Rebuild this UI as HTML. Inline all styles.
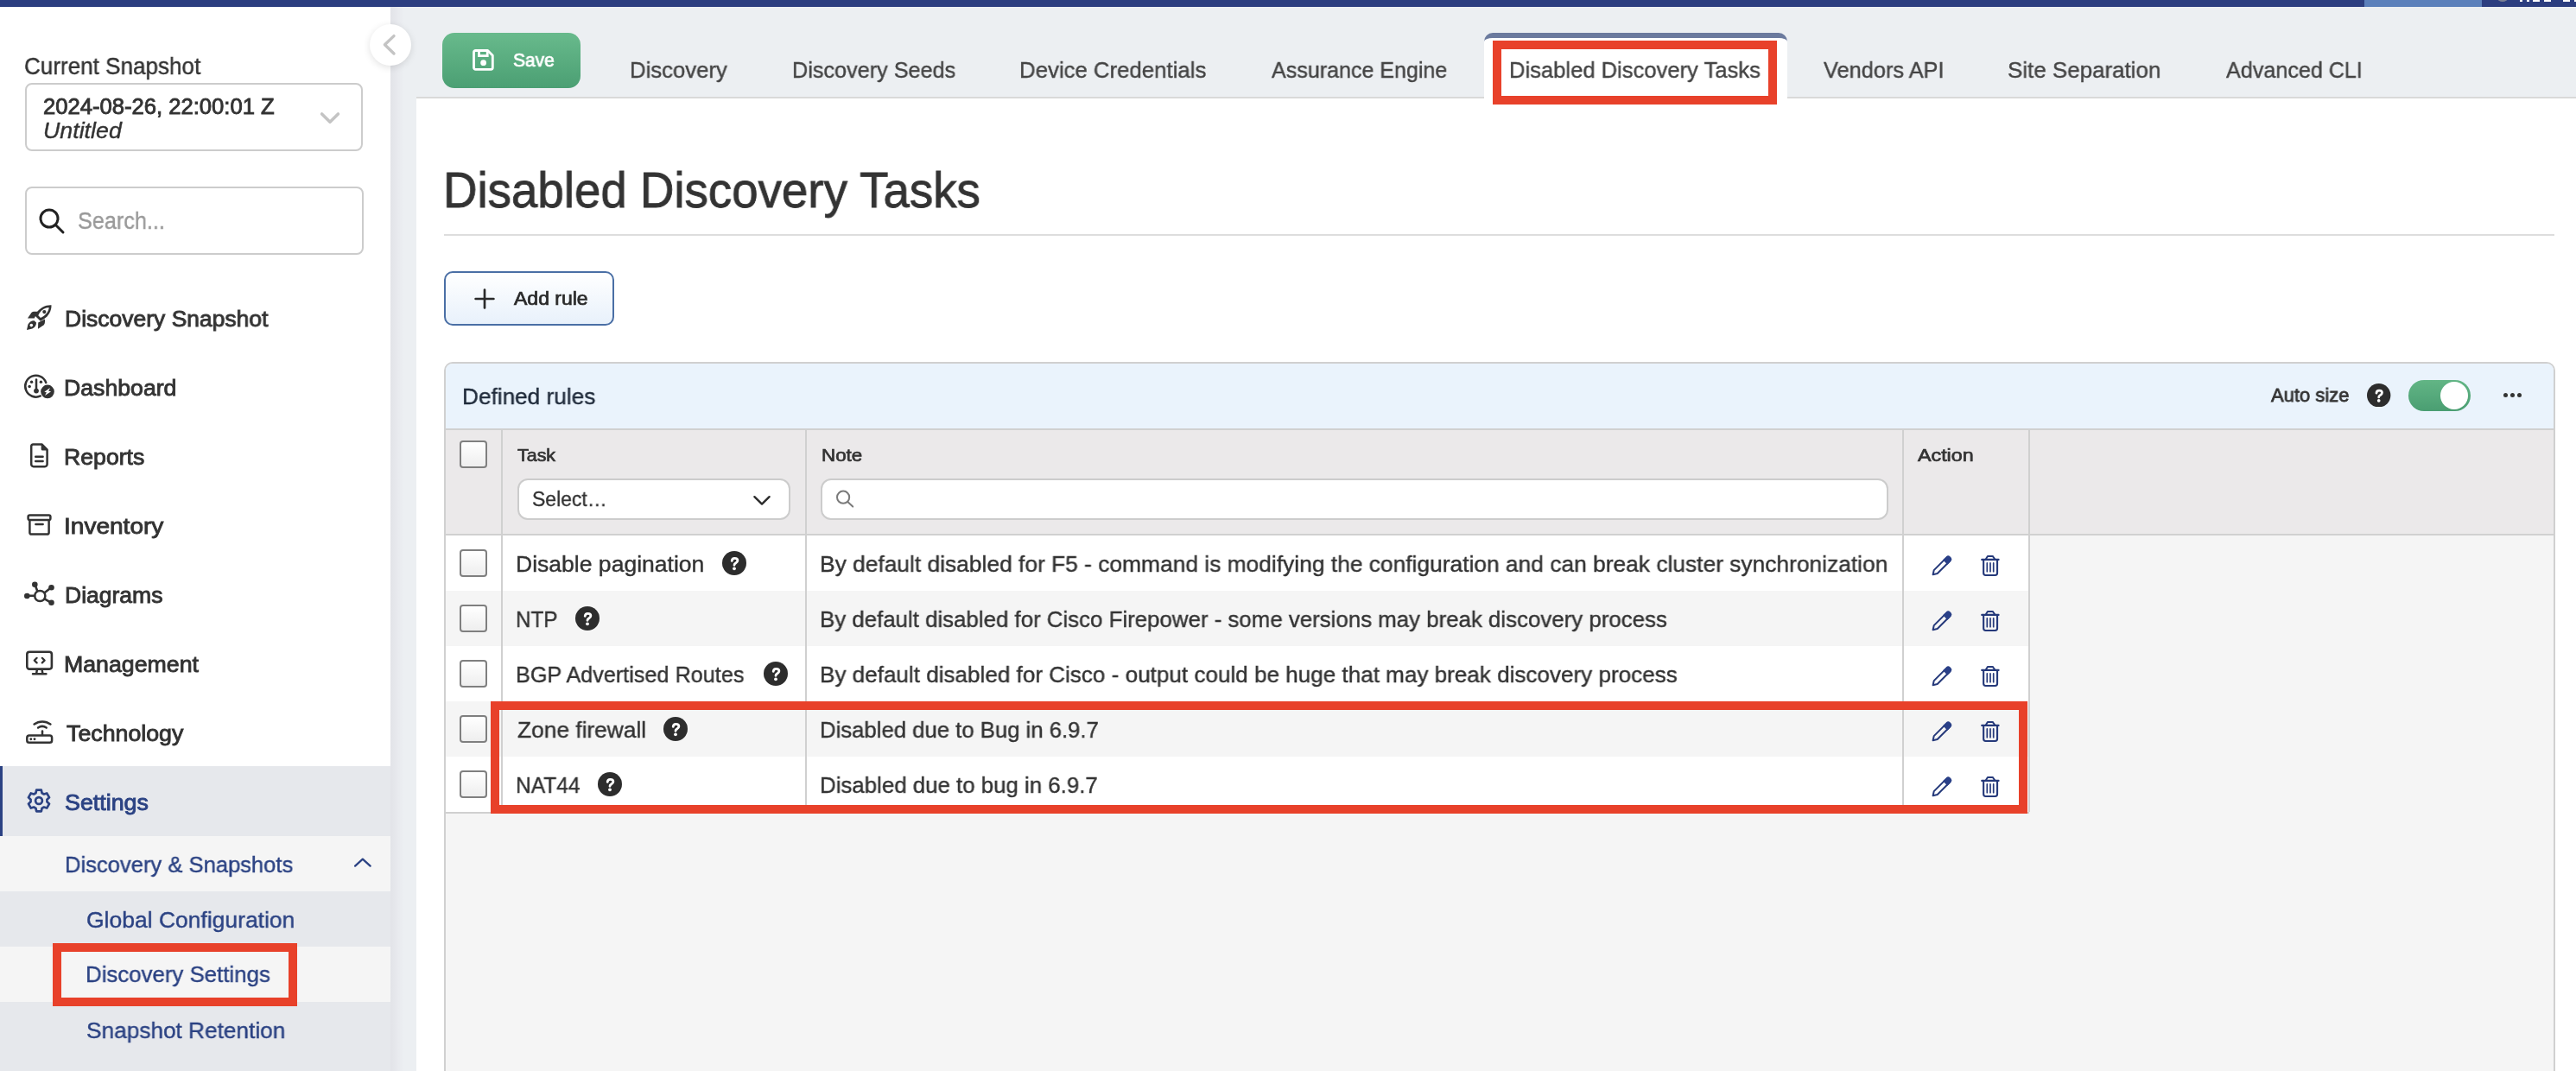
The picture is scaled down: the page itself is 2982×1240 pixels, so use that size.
<!DOCTYPE html>
<html><head><meta charset="utf-8"><style>
html,body{margin:0;padding:0;}
body{width:2982px;height:1240px;overflow:hidden;position:relative;background:#fff;font-family:'Liberation Sans', sans-serif;}
.r{position:absolute;}
.t{position:absolute;white-space:nowrap;line-height:1;transform-origin:0 0;will-change:transform;}
</style></head><body>
<div class="r" style="left:0.0px;top:0.0px;width:2982.0px;height:8.0px;background:#2c3e80"></div>
<div class="r" style="left:2737.0px;top:0.0px;width:136.0px;height:8.0px;background:#5b80bb"></div>
<div class="r" style="left:2891px;top:-6px;width:12px;height:8px;border-radius:50%;background:#7a7f94"></div>
<div class="r" style="left:2917.0px;top:0.0px;width:3.0px;height:2.0px;background:#fff"></div>
<div class="r" style="left:2925.0px;top:0.0px;width:3.0px;height:2.0px;background:#fff"></div>
<div class="r" style="left:2932.0px;top:0.0px;width:8.0px;height:2.0px;background:#fff"></div>
<div class="r" style="left:2945.0px;top:0.0px;width:8.0px;height:2.0px;background:#fff"></div>
<div class="r" style="left:2967.0px;top:0.0px;width:8.0px;height:2.0px;background:#fff"></div>
<div class="r" style="left:2980.0px;top:0.0px;width:2.0px;height:2.0px;background:#fff"></div>
<div class="r" style="left:452.0px;top:8.0px;width:2530.0px;height:104.0px;background:#eceff2"></div>
<div class="r" style="left:482.0px;top:112.0px;width:2500.0px;height:2.0px;background:#d9d9d9"></div>
<div class="r" style="left:452.0px;top:8.0px;width:30.0px;height:1232.0px;background:linear-gradient(90deg,#e2e3e8 0px,#e9ebef 10px,#eceff2 16px)"></div>
<div class="r" style="left:482.0px;top:114.0px;width:2500.0px;height:1126.0px;background:#fff"></div>
<div class="r" style="left:0.0px;top:8.0px;width:452.0px;height:1232.0px;background:#fff"></div>
<div id="t1" class="t" style="left:28.1px;top:63.4px;font-size:27.5px;font-weight:400;color:#333;font-style:normal;transform:scaleX(0.9475);-webkit-text-stroke:0.41px #333;">Current Snapshot</div>
<div class="r" style="left:29.0px;top:96.0px;width:391.0px;height:79.0px;border:2px solid #ccc;border-radius:8px;box-sizing:border-box"></div>
<div id="t2" class="t" style="left:50.4px;top:110.5px;font-size:25.5px;font-weight:400;color:#333;font-style:normal;transform:scaleX(1.0044);-webkit-text-stroke:0.87px #333;">2024-08-26, 22:00:01 Z</div>
<div id="t3" class="t" style="left:49.9px;top:138.5px;font-size:25.5px;font-weight:400;color:#333;font-style:italic;transform:scaleX(1.0501);-webkit-text-stroke:0.38px #333;">Untitled</div>
<svg class="r" style="left:368.0px;top:127.0px;" width="28.0" height="20.0" viewBox="0 0 28 20"><path d="M4.6 5 L14 14.2 L23.4 5" fill="none" stroke="#c4c4c4" stroke-width="3.6" stroke-linecap="round" stroke-linejoin="round"/></svg>
<div class="r" style="left:29.0px;top:216.0px;width:392.0px;height:79.0px;border:2px solid #ccc;border-radius:8px;box-sizing:border-box"></div>
<svg class="r" style="left:44.0px;top:240.0px;" width="32.0" height="32.0" viewBox="0 0 32 32"><circle cx="13" cy="13" r="10" fill="none" stroke="#222" stroke-width="3"/><path d="M20.5 20.5 L29 29" stroke="#222" stroke-width="3" stroke-linecap="round"/></svg>
<div id="t4" class="t" style="left:90.1px;top:243.2px;font-size:27.0px;font-weight:400;color:#999;font-style:normal;transform:scaleX(0.9343);-webkit-text-stroke:0.40px #999;">Search...</div>
<div class="r" style="left:0.0px;top:887.0px;width:452.0px;height:353.0px;background:#e6e8ec"></div>
<div class="r" style="left:0.0px;top:887.0px;width:3.0px;height:81.0px;background:#2b4283"></div>
<div class="r" style="left:0.0px;top:968.0px;width:452.0px;height:64.0px;background:#f5f5f5"></div>
<div class="r" style="left:0.0px;top:1096.0px;width:452.0px;height:64.0px;background:#f5f5f5"></div>
<svg class="r" style="left:29.0px;top:351.0px;" width="32.0" height="33.0" viewBox="0 0 32 33"><path d="M30.5 2.2 C24 1.8 17.5 5 13.6 10.6 L11.4 14.4 L17.8 20.8 L21.6 18.6 C27.2 14.8 30.8 8.6 30.5 2.2 Z" fill="#333"/><path d="M27.6 5.1 C23.4 5.3 19.4 7.5 16.6 11.5 L15.3 14.2 L18 16.9 L20.7 15.6 C24.7 12.8 27.5 9 27.6 5.1 Z" fill="#fff"/><circle cx="22.3" cy="10.1" r="2.1" fill="#333"/><path d="M3 17.4 L7.4 11 C8.4 9.8 10 9.4 14.6 9.8 L10.8 17.4 Z" fill="#333"/><path d="M15 29.8 L21.4 25.6 C22.6 24.6 23.2 23 23 18.6 L15.2 22.4 Z" fill="#333"/><path d="M10.6 20.2 C7.6 20 4.6 21.8 3.4 24.8 L2 31 L8.4 29.6 C11.4 28.4 13.2 25.4 13 22.6 Z" fill="#333"/><circle cx="7.3" cy="25.6" r="1.8" fill="#fff"/></svg>
<svg class="r" style="left:26.0px;top:431.0px;" width="40.0" height="33.0" viewBox="0 0 40 33"><path d="M27.25 11.96 A12.4 12.4 0 1 0 20.84 27.44" fill="none" stroke="#333" stroke-width="2.5" stroke-linecap="round"/><path d="M16 8.4 V21.4" stroke="#333" stroke-width="2.5" stroke-linecap="round"/><circle cx="16" cy="21.6" r="2.9" fill="#333"/><circle cx="10.55" cy="11.2" r="1.75" fill="#333"/><circle cx="21.4" cy="11.2" r="1.75" fill="#333"/><circle cx="8.1" cy="16.4" r="1.75" fill="#333"/><circle cx="29" cy="22.4" r="7.8" fill="#333"/><path d="M32 17.9 L25.3 22.8 L27.9 23.2 L26 27.1 L33.1 22.3 L30.2 21.8 Z" fill="#fff"/></svg>
<svg class="r" style="left:33.0px;top:511.0px;" width="26.0" height="32.0" viewBox="0 0 26 32"><path d="M5.5 3.5 H15.4 L21.6 9.7 V26.6 A2.6 2.6 0 0 1 19 29.2 H5.8 A2.6 2.6 0 0 1 3.2 26.6 V5.8 A2.4 2.4 0 0 1 5.5 3.5 Z" fill="none" stroke="#333" stroke-width="2.5" stroke-linejoin="round"/><path d="M14.6 3.7 V9 A1.6 1.6 0 0 0 16.2 10.6 H21.4 Z" fill="#333"/><path d="M8.2 17.8 H16.6 M8.2 23 H16.6" stroke="#333" stroke-width="2.5" stroke-linecap="round"/></svg>
<svg class="r" style="left:29.0px;top:593.0px;" width="33.0" height="29.0" viewBox="0 0 33 29"><rect x="3.6" y="3.5" width="25.8" height="5.6" rx="1.8" fill="none" stroke="#333" stroke-width="2.5"/><path d="M5.4 9.2 V23.4 A2.2 2.2 0 0 0 7.6 25.6 H25.4 A2.2 2.2 0 0 0 27.6 23.4 V9.2" fill="none" stroke="#333" stroke-width="2.5"/><path d="M12.4 14 H20.6" stroke="#333" stroke-width="2.5" stroke-linecap="round"/></svg>
<svg class="r" style="left:26.0px;top:671.0px;" width="40.0" height="33.0" viewBox="0 0 40 33"><circle cx="20.3" cy="19" r="6.1" fill="none" stroke="#333" stroke-width="2.5"/><path d="M5.1 18.8 H15.2 M14.3 5.7 L17.6 14 M33.2 9.3 L25.6 15.2 M33.2 26.9 L25.6 22.4" stroke="#333" stroke-width="2.6"/><circle cx="5.3" cy="19" r="3.3" fill="#333"/><circle cx="14.3" cy="5.75" r="3.3" fill="#333"/><circle cx="33.5" cy="9.3" r="3.3" fill="#333"/><circle cx="33.5" cy="26.8" r="3.3" fill="#333"/></svg>
<svg class="r" style="left:28.0px;top:751.0px;" width="36.0" height="33.0" viewBox="0 0 36 33"><rect x="3.3" y="3.8" width="28.6" height="19.8" rx="2.8" fill="none" stroke="#333" stroke-width="2.6"/><path d="M14.9 24.2 L14.2 28.4 M20.6 24.2 L21.3 28.4 M10 29.2 H25.4" stroke="#333" stroke-width="2.5" stroke-linecap="round"/><path d="M14.6 10.8 L11.8 13.6 L14.6 16.4 M20.8 10.8 L23.6 13.6 L20.8 16.4" fill="none" stroke="#333" stroke-width="2.2" stroke-linecap="round" stroke-linejoin="round"/></svg>
<svg class="r" style="left:28.0px;top:831.0px;" width="36.0" height="33.0" viewBox="0 0 36 33"><rect x="3.3" y="20.6" width="28.8" height="8.2" rx="2.6" fill="none" stroke="#333" stroke-width="2.5"/><circle cx="7.8" cy="24.7" r="1.45" fill="#333"/><circle cx="12" cy="24.7" r="1.45" fill="#333"/><path d="M21 15.6 V20" stroke="#333" stroke-width="2.5" stroke-linecap="round"/><path d="M16.1 11.6 A8.3 8.3 0 0 1 25.7 11.6 M11.6 7.5 A15.8 15.8 0 0 1 30.4 7.5" fill="none" stroke="#333" stroke-width="2.5" stroke-linecap="round"/></svg>
<svg class="r" style="left:29.4px;top:911.4px;" width="32.0" height="32.0" viewBox="0 0 32 32"><path d="M11.25 7.77 L12.44 7.19 L13.17 3.72 L18.83 3.72 L19.56 7.19 L20.75 7.77 L21.85 8.51 L25.22 7.41 L28.05 12.32 L25.41 14.68 L25.50 16.00 L25.41 17.32 L28.05 19.68 L25.22 24.59 L21.85 23.49 L20.75 24.23 L19.56 24.81 L18.83 28.28 L13.17 28.28 L12.44 24.81 L11.25 24.23 L10.15 23.49 L6.78 24.59 L3.95 19.68 L6.59 17.32 L6.50 16.00 L6.59 14.68 L3.95 12.32 L6.78 7.41 L10.15 8.51 Z" fill="none" stroke="#2b4283" stroke-width="2.7" stroke-linejoin="round"/><circle cx="16" cy="16" r="3.9" fill="none" stroke="#2b4283" stroke-width="2.7"/></svg>
<div id="t5" class="t" style="left:74.5px;top:355.6px;font-size:26.5px;font-weight:400;color:#333;font-style:normal;transform:scaleX(0.9991);-webkit-text-stroke:0.90px #333;">Discovery Snapshot</div>
<div id="t6" class="t" style="left:74.4px;top:435.6px;font-size:26.5px;font-weight:400;color:#333;font-style:normal;transform:scaleX(1.0062);-webkit-text-stroke:0.90px #333;">Dashboard</div>
<div id="t7" class="t" style="left:74.4px;top:515.6px;font-size:26.5px;font-weight:400;color:#333;font-style:normal;transform:scaleX(1.0061);-webkit-text-stroke:0.90px #333;">Reports</div>
<div id="t8" class="t" style="left:74.3px;top:595.6px;font-size:26.5px;font-weight:400;color:#333;font-style:normal;transform:scaleX(1.0584);-webkit-text-stroke:0.90px #333;">Inventory</div>
<div id="t9" class="t" style="left:74.5px;top:675.6px;font-size:26.5px;font-weight:400;color:#333;font-style:normal;transform:scaleX(0.9996);-webkit-text-stroke:0.90px #333;">Diagrams</div>
<div id="t10" class="t" style="left:74.4px;top:755.6px;font-size:26.5px;font-weight:400;color:#333;font-style:normal;transform:scaleX(1.0083);-webkit-text-stroke:0.90px #333;">Management</div>
<div id="t11" class="t" style="left:76.5px;top:835.6px;font-size:26.5px;font-weight:400;color:#333;font-style:normal;transform:scaleX(1.0095);-webkit-text-stroke:0.90px #333;">Technology</div>
<div id="t12" class="t" style="left:75.4px;top:915.6px;font-size:26.5px;font-weight:400;color:#2b4283;font-style:normal;transform:scaleX(1.0125);-webkit-text-stroke:0.90px #2b4283;">Settings</div>
<div id="t13" class="t" style="left:75.1px;top:987.6px;font-size:26.5px;font-weight:400;color:#2b4283;font-style:normal;transform:scaleX(0.9647);-webkit-text-stroke:0.40px #2b4283;">Discovery &amp; Snapshots</div>
<svg class="r" style="left:406.0px;top:990.0px;" width="28.0" height="18.0" viewBox="0 0 28 18"><path d="M5.1 12.6 L13.85 4.6 L22.6 12.6" fill="none" stroke="#2b4283" stroke-width="2.3" stroke-linecap="round" stroke-linejoin="round"/></svg>
<div id="t14" class="t" style="left:100.0px;top:1051.6px;font-size:26.5px;font-weight:400;color:#2b4283;font-style:normal;transform:scaleX(0.9990);-webkit-text-stroke:0.40px #2b4283;">Global Configuration</div>
<div id="t15" class="t" style="left:99.1px;top:1115.1px;font-size:26.5px;font-weight:400;color:#2b4283;font-style:normal;transform:scaleX(0.9743);-webkit-text-stroke:0.40px #2b4283;">Discovery Settings</div>
<div id="t16" class="t" style="left:100.0px;top:1179.6px;font-size:26.5px;font-weight:400;color:#2b4283;font-style:normal;transform:scaleX(0.9895);-webkit-text-stroke:0.40px #2b4283;">Snapshot Retention</div>
<div class="r" style="left:61.0px;top:1092.0px;width:283.0px;height:73.0px;border:10px solid #e8412a;box-sizing:border-box"></div>
<div class="r" style="left:428px;top:28px;width:48px;height:48px;border-radius:50%;background:#fff;box-shadow:0 2px 8px rgba(0,0,0,0.12)"></div>
<svg class="r" style="left:439.0px;top:38.0px;" width="24.0" height="28.0" viewBox="0 0 24 28"><path d="M17 3.6 L6.4 13.8 L17 24" fill="none" stroke="#c4c4c4" stroke-width="3.4" stroke-linecap="round" stroke-linejoin="round"/></svg>
<div class="r" style="left:512.0px;top:38.0px;width:160.0px;height:64.0px;border-radius:14px;background:linear-gradient(#68ba8c,#4b9f73)"></div>
<svg class="r" style="left:545.0px;top:55.0px;" width="30.0" height="30.0" viewBox="0 0 30 30"><path d="M5.5 3.5 H19.6 L25.3 9.2 V23.3 A2 2 0 0 1 23.3 25.3 H5.5 A2 2 0 0 1 3.5 23.3 V5.5 A2 2 0 0 1 5.5 3.5 Z" fill="none" stroke="#fff" stroke-width="2.8" stroke-linejoin="round"/><path d="M9.5 3.8 V9.6 H19.2 V3.8" fill="none" stroke="#fff" stroke-width="2.8"/><circle cx="14.6" cy="17.7" r="3.4" fill="#fff"/></svg>
<div id="t17" class="t" style="left:594.4px;top:60.0px;font-size:21.5px;font-weight:400;color:#fff;font-style:normal;transform:scaleX(0.9758);-webkit-text-stroke:0.73px #fff;">Save</div>
<div class="r" style="left:1718.0px;top:38.0px;width:351.0px;height:76.0px;background:#fff;border-radius:10px 10px 0 0;border-top:6px solid #6b7a9e;box-sizing:border-box"></div>
<div id="t18" class="t" style="left:729.1px;top:67.6px;font-size:26.5px;font-weight:400;color:#444;font-style:normal;transform:scaleX(0.9699);-webkit-text-stroke:0.40px #444;">Discovery</div>
<div id="t19" class="t" style="left:916.6px;top:67.6px;font-size:26.5px;font-weight:400;color:#444;font-style:normal;transform:scaleX(0.9519);-webkit-text-stroke:0.40px #444;">Discovery Seeds</div>
<div id="t20" class="t" style="left:1179.6px;top:67.6px;font-size:26.5px;font-weight:400;color:#444;font-style:normal;transform:scaleX(0.9726);-webkit-text-stroke:0.40px #444;">Device Credentials</div>
<div id="t21" class="t" style="left:1472.0px;top:67.6px;font-size:26.5px;font-weight:400;color:#444;font-style:normal;transform:scaleX(0.9453);-webkit-text-stroke:0.40px #444;">Assurance Engine</div>
<div id="t22" class="t" style="left:1747.1px;top:67.6px;font-size:26.5px;font-weight:400;color:#444;font-style:normal;transform:scaleX(0.9648);-webkit-text-stroke:0.40px #444;">Disabled Discovery Tasks</div>
<div id="t23" class="t" style="left:2111.0px;top:67.6px;font-size:26.5px;font-weight:400;color:#444;font-style:normal;transform:scaleX(0.9563);-webkit-text-stroke:0.40px #444;">Vendors API</div>
<div id="t24" class="t" style="left:2324.0px;top:67.6px;font-size:26.5px;font-weight:400;color:#444;font-style:normal;transform:scaleX(0.9785);-webkit-text-stroke:0.40px #444;">Site Separation</div>
<div id="t25" class="t" style="left:2577.0px;top:67.6px;font-size:26.5px;font-weight:400;color:#444;font-style:normal;transform:scaleX(0.9483);-webkit-text-stroke:0.40px #444;">Advanced CLI</div>
<div class="r" style="left:1728.0px;top:47.0px;width:329.0px;height:74.0px;border:10px solid #e8412a;box-sizing:border-box"></div>
<div id="t26" class="t" style="left:513.2px;top:191.3px;font-size:58.0px;font-weight:400;color:#333;font-style:normal;transform:scaleX(0.9426);-webkit-text-stroke:0.87px #333;">Disabled Discovery Tasks</div>
<div class="r" style="left:514.0px;top:271.0px;width:2443.0px;height:2.0px;background:#ddd"></div>
<div class="r" style="left:514.0px;top:314.0px;width:197.0px;height:63.0px;border:2px solid #4a6fa5;border-radius:10px;box-sizing:border-box;background:linear-gradient(#fff,#e8f1fb)"></div>
<svg class="r" style="left:548.0px;top:333.0px;" width="26.0" height="26.0" viewBox="0 0 26 26"><path d="M13 2.6 V23.4 M2.6 13 H23.4" stroke="#2b2b2b" stroke-width="2.7" stroke-linecap="round"/></svg>
<div id="t27" class="t" style="left:595.4px;top:335.8px;font-size:21.5px;font-weight:400;color:#2b2b2b;font-style:normal;transform:scaleX(1.0695);-webkit-text-stroke:0.73px #2b2b2b;">Add rule</div>
<div class="r" style="left:514.0px;top:419.0px;width:2444.0px;height:841.0px;border:2px solid #d0d0d0;border-radius:10px;box-sizing:border-box;background:#f5f5f5;overflow:hidden"></div>
<div class="r" style="left:516.0px;top:421.0px;width:2440.0px;height:76.0px;background:#eaf3fc;border-radius:8px 8px 0 0"></div>
<div id="t28" class="t" style="left:535.0px;top:445.6px;font-size:26.5px;font-weight:400;color:#1f2a3a;font-style:normal;transform:scaleX(0.9878);-webkit-text-stroke:0.40px #1f2a3a;">Defined rules</div>
<div id="t29" class="t" style="left:2629.4px;top:447.0px;font-size:22.5px;font-weight:400;color:#333;font-style:normal;transform:scaleX(0.9774);-webkit-text-stroke:0.77px #333;">Auto size</div>
<svg class="r" style="left:2740.3px;top:443.8px;" width="27.4" height="27.4" viewBox="0 0 28 28"><circle cx="14" cy="14" r="14" fill="#2d2d2d"/><path d="M11.2 11.3 C11.4 9.1 12.7 8.3 14.4 8.3 C16.5 8.3 17.9 9.4 17.9 11 C17.9 12.6 16.8 13.3 15.6 14 C14.5 14.7 14 15.2 14 16.3" fill="none" stroke="#fff" stroke-width="2.8" stroke-linecap="round"/><circle cx="14" cy="20.3" r="1.9" fill="#fff"/></svg>
<div class="r" style="left:2788.0px;top:440.0px;width:72.0px;height:36.0px;border-radius:18px;background:linear-gradient(#62b585,#4a9e72)"></div>
<div class="r" style="left:2825px;top:442px;width:32px;height:32px;border-radius:50%;background:#fff"></div>
<div class="r" style="left:2898px;top:455px;width:5px;height:5px;border-radius:50%;background:#333"></div>
<div class="r" style="left:2906px;top:455px;width:5px;height:5px;border-radius:50%;background:#333"></div>
<div class="r" style="left:2914px;top:455px;width:5px;height:5px;border-radius:50%;background:#333"></div>
<div class="r" style="left:516.0px;top:496.0px;width:2440.0px;height:2.0px;background:#d0d0d0"></div>
<div class="r" style="left:516.0px;top:498.0px;width:2440.0px;height:120.0px;background:#ebe9ea"></div>
<div class="r" style="left:516.0px;top:618.0px;width:2440.0px;height:2.0px;background:#d0d0d0"></div>
<div class="r" style="left:516.0px;top:620.0px;width:1833.0px;height:64.0px;background:#fff"></div>
<div class="r" style="left:516.0px;top:684.0px;width:1833.0px;height:64.0px;background:#f5f5f5"></div>
<div class="r" style="left:516.0px;top:748.0px;width:1833.0px;height:64.0px;background:#fff"></div>
<div class="r" style="left:516.0px;top:812.0px;width:1833.0px;height:64.0px;background:#f5f5f5"></div>
<div class="r" style="left:516.0px;top:876.0px;width:1833.0px;height:64.0px;background:#fff"></div>
<div class="r" style="left:516.0px;top:940.0px;width:1833.0px;height:2.0px;background:#d0d0d0"></div>
<div class="r" style="left:580.0px;top:498.0px;width:2.0px;height:442.0px;background:#d0d0d0"></div>
<div class="r" style="left:932.0px;top:498.0px;width:2.0px;height:442.0px;background:#d0d0d0"></div>
<div class="r" style="left:2202.0px;top:498.0px;width:2.0px;height:442.0px;background:#d0d0d0"></div>
<div class="r" style="left:2348.0px;top:498.0px;width:2.0px;height:442.0px;background:#d0d0d0"></div>
<div class="r" style="left:532.0px;top:510.0px;width:32.0px;height:32.0px;border:2px solid #7f7f7f;border-radius:4px;box-sizing:border-box;background:linear-gradient(#fff,#eee)"></div>
<div id="t30" class="t" style="left:599.3px;top:516.7px;font-size:20.5px;font-weight:400;color:#333;font-style:normal;transform:scaleX(1.0459);-webkit-text-stroke:0.70px #333;">Task</div>
<div id="t31" class="t" style="left:950.9px;top:516.7px;font-size:20.5px;font-weight:400;color:#333;font-style:normal;transform:scaleX(1.0892);-webkit-text-stroke:0.70px #333;">Note</div>
<div id="t32" class="t" style="left:2220.3px;top:516.7px;font-size:20.5px;font-weight:400;color:#333;font-style:normal;transform:scaleX(1.1349);-webkit-text-stroke:0.70px #333;">Action</div>
<div class="r" style="left:598.5px;top:554.0px;width:316.5px;height:48.0px;border:2px solid #ccc;border-radius:12px;box-sizing:border-box;background:#fff"></div>
<div id="t33" class="t" style="left:615.5px;top:566.8px;font-size:23.0px;font-weight:400;color:#333;font-style:normal;transform:scaleX(0.9968);-webkit-text-stroke:0.34px #333;">Select…</div>
<svg class="r" style="left:868.0px;top:570.0px;" width="28.0" height="18.0" viewBox="0 0 28 18"><path d="M5.4 5.2 L14 13.6 L22.6 5.2" fill="none" stroke="#2b2b2b" stroke-width="2.4" stroke-linecap="round" stroke-linejoin="round"/></svg>
<div class="r" style="left:950.0px;top:554.0px;width:1235.5px;height:48.0px;border:2px solid #ccc;border-radius:12px;box-sizing:border-box;background:#fff"></div>
<svg class="r" style="left:964.0px;top:564.0px;" width="28.0" height="28.0" viewBox="0 0 28 28"><circle cx="12.1" cy="11.7" r="7.1" fill="none" stroke="#7a7a7a" stroke-width="2"/><path d="M17.3 17 L23.2 22.6" stroke="#7a7a7a" stroke-width="2" stroke-linecap="round"/></svg>
<div class="r" style="left:532.0px;top:635.7px;width:32.0px;height:32.0px;border:2px solid #7f7f7f;border-radius:4px;box-sizing:border-box;background:linear-gradient(#fff,#eee)"></div>
<div id="t34" class="t" style="left:597.0px;top:639.6px;font-size:26.5px;font-weight:400;color:#333;font-style:normal;transform:scaleX(1.0014);-webkit-text-stroke:0.40px #333;">Disable pagination</div>
<svg class="r" style="left:835.5px;top:637.5px;" width="28.0" height="28.0" viewBox="0 0 28 28"><circle cx="14" cy="14" r="14" fill="#2d2d2d"/><path d="M11.2 11.3 C11.4 9.1 12.7 8.3 14.4 8.3 C16.5 8.3 17.9 9.4 17.9 11 C17.9 12.6 16.8 13.3 15.6 14 C14.5 14.7 14 15.2 14 16.3" fill="none" stroke="#fff" stroke-width="2.8" stroke-linecap="round"/><circle cx="14" cy="20.3" r="1.9" fill="#fff"/></svg>
<div id="t35" class="t" style="left:949.0px;top:639.6px;font-size:26.5px;font-weight:400;color:#333;font-style:normal;transform:scaleX(0.9945);-webkit-text-stroke:0.40px #333;">By default disabled for F5 - command is modifying the configuration and can break cluster synchronization</div>
<svg class="r" style="left:2235.0px;top:643.0px;" width="26.0" height="26.0" viewBox="0 0 26 26"><g transform="translate(1.9 22.9) rotate(-45)"><path d="M1 0 L5.4 -2.8 H25.9 A2.8 2.8 0 0 1 25.9 2.8 H5.4 Z" fill="none" stroke="#25397a" stroke-width="2" stroke-linejoin="round"/><path d="M21 -3.8 H25.9 A3.8 3.8 0 0 1 25.9 3.8 H21 Z" fill="#2a4088"/></g></svg>
<svg class="r" style="left:2293.0px;top:643.0px;" width="22.0" height="25.0" viewBox="0 0 22 25"><path d="M1.2 4.9 H20.6" stroke="#25397a" stroke-width="2.1" stroke-linecap="round"/><path d="M5.8 4.4 L7.4 1.7 Q7.7 1.1 8.4 1.1 H13.4 Q14.1 1.1 14.4 1.7 L16.2 4.4" fill="none" stroke="#25397a" stroke-width="2"/><path d="M3.15 5.4 V20.6 A2.4 2.4 0 0 0 5.55 23 H16.65 A2.4 2.4 0 0 0 19.05 20.6 V5.4" fill="none" stroke="#25397a" stroke-width="2.1"/><path d="M7.3 8.9 V18.7 M11 8.9 V18.7 M14.7 8.9 V18.7" stroke="#25397a" stroke-width="1.7" stroke-linecap="round"/></svg>
<div class="r" style="left:532.0px;top:699.7px;width:32.0px;height:32.0px;border:2px solid #7f7f7f;border-radius:4px;box-sizing:border-box;background:linear-gradient(#fff,#eee)"></div>
<div id="t36" class="t" style="left:597.2px;top:703.6px;font-size:26.5px;font-weight:400;color:#333;font-style:normal;transform:scaleX(0.9148);-webkit-text-stroke:0.40px #333;">NTP</div>
<svg class="r" style="left:665.9px;top:701.5px;" width="28.0" height="28.0" viewBox="0 0 28 28"><circle cx="14" cy="14" r="14" fill="#2d2d2d"/><path d="M11.2 11.3 C11.4 9.1 12.7 8.3 14.4 8.3 C16.5 8.3 17.9 9.4 17.9 11 C17.9 12.6 16.8 13.3 15.6 14 C14.5 14.7 14 15.2 14 16.3" fill="none" stroke="#fff" stroke-width="2.8" stroke-linecap="round"/><circle cx="14" cy="20.3" r="1.9" fill="#fff"/></svg>
<div id="t37" class="t" style="left:949.0px;top:703.6px;font-size:26.5px;font-weight:400;color:#333;font-style:normal;transform:scaleX(0.9750);-webkit-text-stroke:0.40px #333;">By default disabled for Cisco Firepower - some versions may break discovery process</div>
<svg class="r" style="left:2235.0px;top:707.0px;" width="26.0" height="26.0" viewBox="0 0 26 26"><g transform="translate(1.9 22.9) rotate(-45)"><path d="M1 0 L5.4 -2.8 H25.9 A2.8 2.8 0 0 1 25.9 2.8 H5.4 Z" fill="none" stroke="#25397a" stroke-width="2" stroke-linejoin="round"/><path d="M21 -3.8 H25.9 A3.8 3.8 0 0 1 25.9 3.8 H21 Z" fill="#2a4088"/></g></svg>
<svg class="r" style="left:2293.0px;top:707.0px;" width="22.0" height="25.0" viewBox="0 0 22 25"><path d="M1.2 4.9 H20.6" stroke="#25397a" stroke-width="2.1" stroke-linecap="round"/><path d="M5.8 4.4 L7.4 1.7 Q7.7 1.1 8.4 1.1 H13.4 Q14.1 1.1 14.4 1.7 L16.2 4.4" fill="none" stroke="#25397a" stroke-width="2"/><path d="M3.15 5.4 V20.6 A2.4 2.4 0 0 0 5.55 23 H16.65 A2.4 2.4 0 0 0 19.05 20.6 V5.4" fill="none" stroke="#25397a" stroke-width="2.1"/><path d="M7.3 8.9 V18.7 M11 8.9 V18.7 M14.7 8.9 V18.7" stroke="#25397a" stroke-width="1.7" stroke-linecap="round"/></svg>
<div class="r" style="left:532.0px;top:763.7px;width:32.0px;height:32.0px;border:2px solid #7f7f7f;border-radius:4px;box-sizing:border-box;background:linear-gradient(#fff,#eee)"></div>
<div id="t38" class="t" style="left:597.1px;top:767.6px;font-size:26.5px;font-weight:400;color:#333;font-style:normal;transform:scaleX(0.9514);-webkit-text-stroke:0.40px #333;">BGP Advertised Routes</div>
<svg class="r" style="left:884.0px;top:765.5px;" width="28.0" height="28.0" viewBox="0 0 28 28"><circle cx="14" cy="14" r="14" fill="#2d2d2d"/><path d="M11.2 11.3 C11.4 9.1 12.7 8.3 14.4 8.3 C16.5 8.3 17.9 9.4 17.9 11 C17.9 12.6 16.8 13.3 15.6 14 C14.5 14.7 14 15.2 14 16.3" fill="none" stroke="#fff" stroke-width="2.8" stroke-linecap="round"/><circle cx="14" cy="20.3" r="1.9" fill="#fff"/></svg>
<div id="t39" class="t" style="left:949.0px;top:767.6px;font-size:26.5px;font-weight:400;color:#333;font-style:normal;transform:scaleX(0.9839);-webkit-text-stroke:0.40px #333;">By default disabled for Cisco - output could be huge that may break discovery process</div>
<svg class="r" style="left:2235.0px;top:771.0px;" width="26.0" height="26.0" viewBox="0 0 26 26"><g transform="translate(1.9 22.9) rotate(-45)"><path d="M1 0 L5.4 -2.8 H25.9 A2.8 2.8 0 0 1 25.9 2.8 H5.4 Z" fill="none" stroke="#25397a" stroke-width="2" stroke-linejoin="round"/><path d="M21 -3.8 H25.9 A3.8 3.8 0 0 1 25.9 3.8 H21 Z" fill="#2a4088"/></g></svg>
<svg class="r" style="left:2293.0px;top:771.0px;" width="22.0" height="25.0" viewBox="0 0 22 25"><path d="M1.2 4.9 H20.6" stroke="#25397a" stroke-width="2.1" stroke-linecap="round"/><path d="M5.8 4.4 L7.4 1.7 Q7.7 1.1 8.4 1.1 H13.4 Q14.1 1.1 14.4 1.7 L16.2 4.4" fill="none" stroke="#25397a" stroke-width="2"/><path d="M3.15 5.4 V20.6 A2.4 2.4 0 0 0 5.55 23 H16.65 A2.4 2.4 0 0 0 19.05 20.6 V5.4" fill="none" stroke="#25397a" stroke-width="2.1"/><path d="M7.3 8.9 V18.7 M11 8.9 V18.7 M14.7 8.9 V18.7" stroke="#25397a" stroke-width="1.7" stroke-linecap="round"/></svg>
<div class="r" style="left:532.0px;top:827.7px;width:32.0px;height:32.0px;border:2px solid #7f7f7f;border-radius:4px;box-sizing:border-box;background:linear-gradient(#fff,#eee)"></div>
<div id="t40" class="t" style="left:599.0px;top:831.6px;font-size:26.5px;font-weight:400;color:#333;font-style:normal;transform:scaleX(0.9924);-webkit-text-stroke:0.40px #333;">Zone firewall</div>
<svg class="r" style="left:768.1px;top:829.5px;" width="28.0" height="28.0" viewBox="0 0 28 28"><circle cx="14" cy="14" r="14" fill="#2d2d2d"/><path d="M11.2 11.3 C11.4 9.1 12.7 8.3 14.4 8.3 C16.5 8.3 17.9 9.4 17.9 11 C17.9 12.6 16.8 13.3 15.6 14 C14.5 14.7 14 15.2 14 16.3" fill="none" stroke="#fff" stroke-width="2.8" stroke-linecap="round"/><circle cx="14" cy="20.3" r="1.9" fill="#fff"/></svg>
<div id="t41" class="t" style="left:949.1px;top:831.6px;font-size:26.5px;font-weight:400;color:#333;font-style:normal;transform:scaleX(0.9697);-webkit-text-stroke:0.40px #333;">Disabled due to Bug in 6.9.7</div>
<svg class="r" style="left:2235.0px;top:835.0px;" width="26.0" height="26.0" viewBox="0 0 26 26"><g transform="translate(1.9 22.9) rotate(-45)"><path d="M1 0 L5.4 -2.8 H25.9 A2.8 2.8 0 0 1 25.9 2.8 H5.4 Z" fill="none" stroke="#25397a" stroke-width="2" stroke-linejoin="round"/><path d="M21 -3.8 H25.9 A3.8 3.8 0 0 1 25.9 3.8 H21 Z" fill="#2a4088"/></g></svg>
<svg class="r" style="left:2293.0px;top:835.0px;" width="22.0" height="25.0" viewBox="0 0 22 25"><path d="M1.2 4.9 H20.6" stroke="#25397a" stroke-width="2.1" stroke-linecap="round"/><path d="M5.8 4.4 L7.4 1.7 Q7.7 1.1 8.4 1.1 H13.4 Q14.1 1.1 14.4 1.7 L16.2 4.4" fill="none" stroke="#25397a" stroke-width="2"/><path d="M3.15 5.4 V20.6 A2.4 2.4 0 0 0 5.55 23 H16.65 A2.4 2.4 0 0 0 19.05 20.6 V5.4" fill="none" stroke="#25397a" stroke-width="2.1"/><path d="M7.3 8.9 V18.7 M11 8.9 V18.7 M14.7 8.9 V18.7" stroke="#25397a" stroke-width="1.7" stroke-linecap="round"/></svg>
<div class="r" style="left:532.0px;top:891.7px;width:32.0px;height:32.0px;border:2px solid #7f7f7f;border-radius:4px;box-sizing:border-box;background:linear-gradient(#fff,#eee)"></div>
<div id="t42" class="t" style="left:597.1px;top:895.6px;font-size:26.5px;font-weight:400;color:#333;font-style:normal;transform:scaleX(0.9262);-webkit-text-stroke:0.40px #333;">NAT44</div>
<svg class="r" style="left:691.9px;top:893.5px;" width="28.0" height="28.0" viewBox="0 0 28 28"><circle cx="14" cy="14" r="14" fill="#2d2d2d"/><path d="M11.2 11.3 C11.4 9.1 12.7 8.3 14.4 8.3 C16.5 8.3 17.9 9.4 17.9 11 C17.9 12.6 16.8 13.3 15.6 14 C14.5 14.7 14 15.2 14 16.3" fill="none" stroke="#fff" stroke-width="2.8" stroke-linecap="round"/><circle cx="14" cy="20.3" r="1.9" fill="#fff"/></svg>
<div id="t43" class="t" style="left:949.0px;top:895.6px;font-size:26.5px;font-weight:400;color:#333;font-style:normal;transform:scaleX(0.9750);-webkit-text-stroke:0.40px #333;">Disabled due to bug in 6.9.7</div>
<svg class="r" style="left:2235.0px;top:899.0px;" width="26.0" height="26.0" viewBox="0 0 26 26"><g transform="translate(1.9 22.9) rotate(-45)"><path d="M1 0 L5.4 -2.8 H25.9 A2.8 2.8 0 0 1 25.9 2.8 H5.4 Z" fill="none" stroke="#25397a" stroke-width="2" stroke-linejoin="round"/><path d="M21 -3.8 H25.9 A3.8 3.8 0 0 1 25.9 3.8 H21 Z" fill="#2a4088"/></g></svg>
<svg class="r" style="left:2293.0px;top:899.0px;" width="22.0" height="25.0" viewBox="0 0 22 25"><path d="M1.2 4.9 H20.6" stroke="#25397a" stroke-width="2.1" stroke-linecap="round"/><path d="M5.8 4.4 L7.4 1.7 Q7.7 1.1 8.4 1.1 H13.4 Q14.1 1.1 14.4 1.7 L16.2 4.4" fill="none" stroke="#25397a" stroke-width="2"/><path d="M3.15 5.4 V20.6 A2.4 2.4 0 0 0 5.55 23 H16.65 A2.4 2.4 0 0 0 19.05 20.6 V5.4" fill="none" stroke="#25397a" stroke-width="2.1"/><path d="M7.3 8.9 V18.7 M11 8.9 V18.7 M14.7 8.9 V18.7" stroke="#25397a" stroke-width="1.7" stroke-linecap="round"/></svg>
<div class="r" style="left:568.0px;top:812.0px;width:1779.0px;height:130.0px;border:10px solid #e8412a;box-sizing:border-box"></div>
</body></html>
